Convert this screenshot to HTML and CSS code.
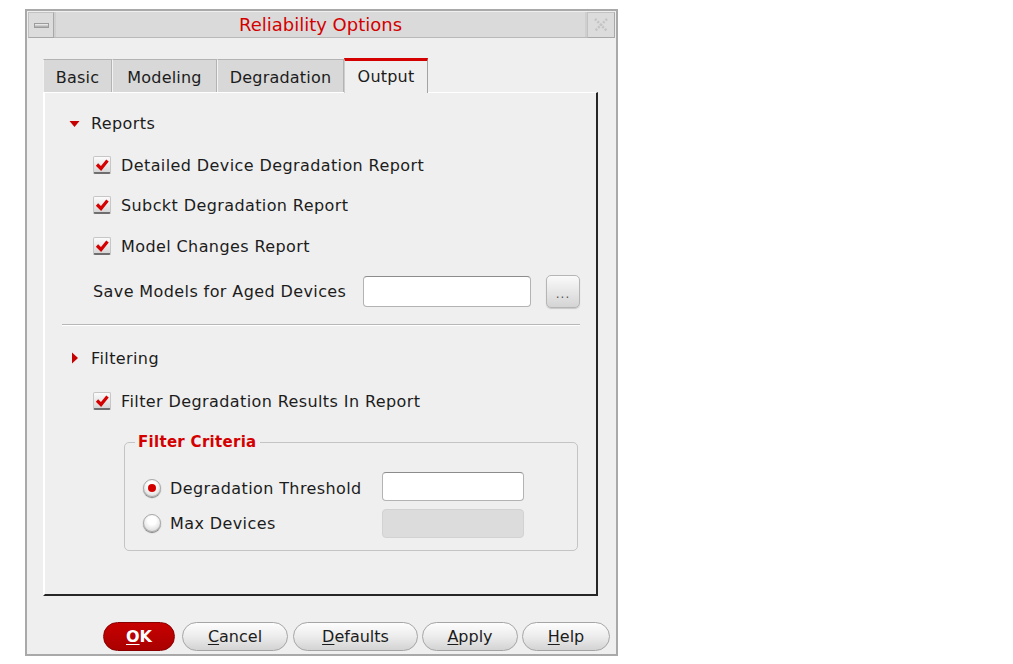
FILE: index.html
```html
<!DOCTYPE html>
<html>
<head>
<meta charset="utf-8">
<link rel="stylesheet" href="styles.css">
</head>
<body>
<div class="dialog">
  <div class="titlebar">
    <div class="tb-btn tb-min"><span class="dash"></span></div>
    <div class="tb-title">Reliability Options</div>
    <div class="tb-btn tb-close">
      <svg width="18" height="18" viewBox="0 0 18 18"><path d="M3 3 L15 15 M15 3 L3 15" stroke="#c4c4c4" stroke-width="2.5" stroke-dasharray="2 1.5" fill="none"/></svg>
    </div>
  </div>

  <div class="tabs">
    <div class="tab t-basic">Basic</div>
    <div class="tab t-model">Modeling</div>
    <div class="tab t-degr">Degradation</div>
    <div class="tab active t-out">Output</div>
  </div>

  <div class="panel">
    <div class="row disclosure r-reports">
      <svg class="tri" width="11" height="11" viewBox="0 0 11 11"><path d="M0.5 3 L10.5 3 L5.5 9 Z" fill="#c40000"/></svg>
      <span>Reports</span>
    </div>
    <div class="row cbrow r-detailed">
      <span class="check"><svg width="16" height="16" viewBox="0 0 16 16"><path d="M3 7.5 L7 11.5 L13.5 3.5" stroke="#d40000" stroke-width="3.2" fill="none"/></svg></span>
      <span>Detailed Device Degradation Report</span>
    </div>
    <div class="row cbrow r-subckt">
      <span class="check"><svg width="16" height="16" viewBox="0 0 16 16"><path d="M3 7.5 L7 11.5 L13.5 3.5" stroke="#d40000" stroke-width="3.2" fill="none"/></svg></span>
      <span>Subckt Degradation Report</span>
    </div>
    <div class="row cbrow r-model">
      <span class="check"><svg width="16" height="16" viewBox="0 0 16 16"><path d="M3 7.5 L7 11.5 L13.5 3.5" stroke="#d40000" stroke-width="3.2" fill="none"/></svg></span>
      <span>Model Changes Report</span>
    </div>
    <div class="row saverow">
      <span class="save-label">Save Models for Aged Devices</span>
      <span class="field save-field"></span>
      <span class="browse">...</span>
    </div>
    <div class="sep"></div>
    <div class="row disclosure r-filtering">
      <svg class="tri" width="11" height="12" viewBox="0 0 11 12"><path d="M3 0.5 L9 6 L3 11.5 Z" fill="#c40000"/></svg>
      <span>Filtering</span>
    </div>
    <div class="row cbrow r-filter">
      <span class="check"><svg width="16" height="16" viewBox="0 0 16 16"><path d="M3 7.5 L7 11.5 L13.5 3.5" stroke="#d40000" stroke-width="3.2" fill="none"/></svg></span>
      <span>Filter Degradation Results In Report</span>
    </div>
    <fieldset class="group">
      <legend>Filter Criteria</legend>
      <div class="grow g-first">
        <span class="radio on"></span>
        <span class="glabel">Degradation Threshold</span>
        <span class="field gfield"></span>
      </div>
      <div class="grow g-second">
        <span class="radio"></span>
        <span class="glabel">Max Devices</span>
        <span class="field gfield disabled"></span>
      </div>
    </fieldset>
  </div>

  <div class="buttons">
    <span class="btn ok"><u>O</u>K</span>
    <span class="btn b-cancel"><u>C</u>ancel</span>
    <span class="btn b-defaults"><u>D</u>efaults</span>
    <span class="btn b-apply"><u>A</u>pply</span>
    <span class="btn b-help"><u>H</u>elp</span>
  </div>
</div>
</body>
</html>
```
FILE: styles.css
```css
* { box-sizing: border-box; }
html, body { margin: 0; background: #ffffff; }
body {
  padding: 9px 0 0 25px;
  font-family: "DejaVu Sans", "Liberation Sans", sans-serif;
  font-size: 16px;
  color: #1c1c1c;
}
.dialog {
  width: 593px;
  border: 2px solid #a9a9a9;
  padding: 1px 1px 3px 1px;
  background: #efefef;
}
.titlebar {
  display: flex;
  height: 26px;
  background: #dadada;
  border-bottom: 1px solid #b9b9b9;
}
.tb-btn {
  width: 26px;
  height: 26px;
  display: flex;
  align-items: center;
  justify-content: center;
  background: #dcdcdc;
  border: 1px solid #c2c2c2;
  border-right-color: #a8a8a8;
  border-bottom-color: #a8a8a8;
}
.tb-close { width: 28px; }
.dash {
  width: 15px;
  height: 5px;
  background: linear-gradient(#f4f4f4, #a6a6a6);
  border: 1px solid #9c9c9c;
}
.tb-title {
  flex: 1;
  text-align: center;
  color: #d40000;
  font-size: 18px;
  line-height: 26px;
  border-left: 2px solid #cfcfcf;
  border-right: 2px solid #cfcfcf;
}
.tabs {
  display: flex;
  align-items: flex-end;
  margin: 20px 0 0 15px;
  height: 34px;
}
.tab {
  height: 33px;
  line-height: 32px;
  padding-top: 2px;
  text-align: center;
  background: #d8d8d8;
  border: 1px solid #b3b3b3;
  border-bottom: none;
  border-left-color: #f2f2f2;
  color: #1c1c1c;
  letter-spacing: 0.2px;
}
.t-basic { width: 69px; }
.t-model { width: 105px; }
.t-degr { width: 127px; }
.t-out { width: 84px; }
.tab.active {
  background: #efefef;
  border-top: 3px solid #d40000;
  border-left: 1px solid #cdcdcd;
  border-right: 1px solid #a3a3a3;
  line-height: 32px;
  padding-top: 0;
  position: relative;
  z-index: 1;
  margin-bottom: -1px;
  height: 35px;
}
.panel {
  margin-left: 15px;
  width: 555px;
  height: 504px;
  border-top: 1px solid #ffffff;
  border-left: 2px solid #ffffff;
  border-right: 2px solid #262626;
  border-bottom: 2px solid #262626;
  padding-top: 18px;
  display: flex;
  flex-direction: column;
  letter-spacing: 0.4px;
}
.row {
  display: flex;
  align-items: center;
  height: 24px;
}
.disclosure { margin-left: 24px; gap: 11px; }
.cbrow { margin-left: 48px; gap: 10px; }
.r-detailed { margin-top: 18px; }
.r-subckt { margin-top: 16px; }
.r-model { margin-top: 17px; }
.check {
  width: 18px;
  height: 18px;
  display: flex;
  align-items: center;
  justify-content: center;
  border: 1px solid #c6c6c6;
  border-bottom: 2px solid #6e6e6e;
  border-radius: 2px;
  background: linear-gradient(#fbfbfb, #d7d7d7);
}
.saverow {
  margin: 17px 0 0 48px;
  height: 33px;
}
.save-label { width: 270px; }
.field {
  display: block;
  background: #ffffff;
  border: 1px solid #b3b3b3;
  border-top-color: #8c8c8c;
  border-radius: 4px;
}
.save-field { width: 168px; height: 31px; }
.browse {
  margin-left: 15px;
  width: 34px;
  height: 33px;
  border: 1px solid #b5b5b5;
  border-radius: 5px;
  background: linear-gradient(#fafafa, #d4d4d4);
  font-size: 12px;
  letter-spacing: 1px;
  color: #555;
  display: flex;
  align-items: center;
  justify-content: center;
  padding-top: 4px;
  box-shadow: 0 1px 1px #c8c8c8;
}
.sep {
  margin: 16px 0 0 17px;
  width: 518px;
  height: 2px;
  border-top: 1px solid #b7b7b7;
  border-bottom: 1px solid #ffffff;
}
.r-filtering { margin-top: 20px; }
.r-filter { margin-top: 19px; }
.group {
  margin: 20px 0 0 79px;
  width: 454px;
  padding: 0 0 12px 18px;
  border: 1px solid #c4c4c4;
  border-radius: 5px;
}
.group legend {
  margin-left: -8px;
  padding: 0 3px;
  line-height: 18px;
  font-weight: bold;
  font-size: 15px;
  letter-spacing: 0.3px;
  color: #d40000;
}
.grow {
  display: flex;
  align-items: center;
  height: 29px;
}
.g-first { margin-top: 21px; }
.g-second { margin-top: 8px; }
.radio {
  width: 18px;
  height: 18px;
  border-radius: 50%;
  border: 1px solid #a8a8a8;
  background: radial-gradient(circle at 50% 35%, #ffffff 30%, #d0d0d0 100%);
  box-shadow: 0 1px 1px #7a7a7a;
  position: relative;
  margin-top: 2px;
}
.radio.on::after {
  content: "";
  position: absolute;
  left: 4px;
  top: 4px;
  width: 8px;
  height: 8px;
  border-radius: 50%;
  background: #d40000;
}
.g-second .radio { margin-top: -1px; }
.glabel { margin-left: 9px; width: 212px; }
.g-first .glabel { margin-top: 3px; }
.g-second .glabel { margin-top: -1px; }
.gfield { width: 142px; height: 29px; }
.gfield.disabled {
  background: #dcdcdc;
  border-color: #d2d2d2;
}
.buttons {
  display: flex;
  justify-content: flex-end;
  gap: 4px;
  margin-top: 26px;
  padding-right: 5px;
}
.btn {
  height: 29px;
  border-radius: 15px;
  border: 1px solid #a5a5a5;
  background: linear-gradient(#fdfdfd 0%, #ececec 50%, #d3d3d3 100%);
  display: flex;
  align-items: center;
  justify-content: center;
  color: #1c1c1c;
}
.btn u { text-decoration-thickness: 1px; text-underline-offset: 2px; }
.ok {
  width: 72px;
  margin-right: 3px;
  background: linear-gradient(#c70000, #aa0000);
  border-color: #8a0000;
  color: #ffffff;
  font-weight: bold;
}
.b-cancel { width: 106px; margin-right: 1px; }
.b-defaults { width: 125px; }
.b-apply { width: 96px; }
.b-help { width: 88px; }
```
